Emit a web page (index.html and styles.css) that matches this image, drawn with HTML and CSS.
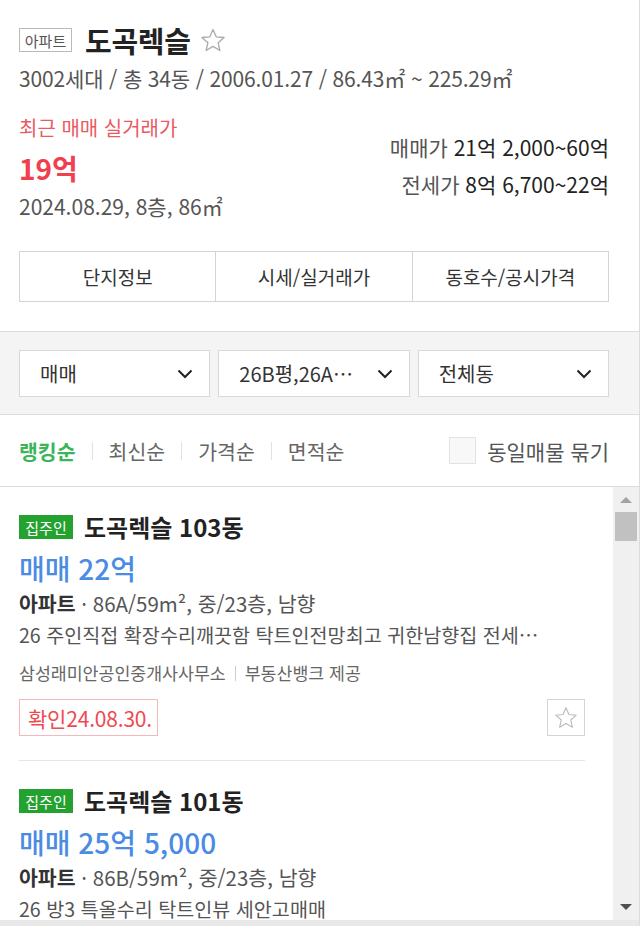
FILE: index.html
```html
<!DOCTYPE html>
<html lang="ko">
<head>
    <meta charset="UTF-8">
    <meta name="viewport" content="width=device-width, initial-scale=1.0">
    <title>도곡렉슬</title>
    <link rel="stylesheet" href="styles.css">
</head>
<body>
<div class="page">

    <!-- Complex summary -->
    <header class="complex">
        <div class="title-row">
            <span class="type-badge">아파트</span>
            <h1 class="complex-name">도곡렉슬</h1>
            <svg class="title-star" width="26" height="24" viewBox="0 0 26 24">
                <path d="M13 1.5l3.2 7.3 7.9.7-6 5.2 1.8 7.8L13 18.4l-6.9 4.1 1.8-7.8-6-5.2 7.9-.7z" fill="none" stroke="#aaa" stroke-width="1.3" stroke-linejoin="round"/>
            </svg>
        </div>
        <p class="summary">3002세대 / 총 34동 / 2006.01.27 / 86.43㎡ ~ 225.29㎡</p>

        <div class="price-row">
            <div class="recent">
                <p class="recent-label">최근 매매 실거래가</p>
                <p class="recent-price">19억</p>
                <p class="recent-meta">2024.08.29, 8층, 86㎡</p>
            </div>
            <div class="ranges">
                <p><span class="range-label">매매가</span> 21억 2,000~60억</p>
                <p><span class="range-label">전세가</span> 8억 6,700~22억</p>
            </div>
        </div>

        <nav class="tabs">
            <button class="tab">단지정보</button>
            <button class="tab">시세/실거래가</button>
            <button class="tab">동호수/공시가격</button>
        </nav>
    </header>

    <!-- Filters -->
    <div class="filters">
        <div class="select"><span>매매</span><svg class="chev" width="16" height="10" viewBox="0 0 16 10"><path d="M1.5 1.5L8 8l6.5-6.5" fill="none" stroke="#222" stroke-width="2"/></svg></div>
        <div class="select"><span>26B평,26A…</span><svg class="chev" width="16" height="10" viewBox="0 0 16 10"><path d="M1.5 1.5L8 8l6.5-6.5" fill="none" stroke="#222" stroke-width="2"/></svg></div>
        <div class="select"><span>전체동</span><svg class="chev" width="16" height="10" viewBox="0 0 16 10"><path d="M1.5 1.5L8 8l6.5-6.5" fill="none" stroke="#222" stroke-width="2"/></svg></div>
    </div>

    <!-- Sort options -->
    <div class="sortbar">
        <ul class="sorts">
            <li class="sort active">랭킹순</li>
            <li class="sort">최신순</li>
            <li class="sort">가격순</li>
            <li class="sort">면적순</li>
        </ul>
        <label class="group-check"><span class="box"></span>동일매물 묶기</label>
    </div>

    <!-- Listings -->
    <div class="listing-wrap">
        <div class="listing">
            <article class="item">
                <div class="item-head">
                    <span class="owner-badge">집주인</span>
                    <h2 class="item-name">도곡렉슬 103동</h2>
                </div>
                <p class="item-price">매매 22억</p>
                <p class="item-spec"><strong>아파트</strong> · 86A/59m², 중/23층, 남향</p>
                <p class="item-desc">26 주인직접 확장수리깨끗함 탁트인전망최고 귀한남향집 전세…</p>
                <p class="item-agent">삼성래미안공인중개사사무소<span class="bar"></span>부동산뱅크 제공</p>
                <div class="item-foot">
                    <span class="confirm">확인24.08.30.</span>
                    <button class="fav">
                        <svg width="24" height="23" viewBox="0 0 26 24"><path d="M13 1.5l3.2 7.3 7.9.7-6 5.2 1.8 7.8L13 18.4l-6.9 4.1 1.8-7.8-6-5.2 7.9-.7z" fill="none" stroke="#bbb" stroke-width="1.2" stroke-linejoin="round"/></svg>
                    </button>
                </div>
            </article>
            <article class="item">
                <div class="item-head">
                    <span class="owner-badge">집주인</span>
                    <h2 class="item-name">도곡렉슬 101동</h2>
                </div>
                <p class="item-price">매매 25억 5,000</p>
                <p class="item-spec"><strong>아파트</strong> · 86B/59m², 중/23층, 남향</p>
                <p class="item-desc">26 방3 특올수리 탁트인뷰 세안고매매</p>
            </article>
        </div>
        <div class="scrollbar">
            <span class="arrow up"></span>
            <div class="track"><span class="thumb"></span></div>
            <span class="arrow down"></span>
        </div>
    </div>
    <div class="bottom-strip"></div>
</div>
</body>
</html>
```

FILE: styles.css
```css
* {
    box-sizing: border-box;
}

body {
    margin: 0;
    font-family: "Noto Sans CJK KR", "Noto Sans", sans-serif;
    color: #222;
    background-color: #fff;
}

p, h1, h2, ul {
    margin: 0;
    padding: 0;
}

.page {
    width: 640px;
    height: 926px;
    border-right: 1px solid #dcdcdc;
    overflow: hidden;
}

/* Complex header */
.complex {
    padding: 24px 30px 29px 19px;
}

.title-row {
    display: flex;
    align-items: center;
    height: 32px;
}

.type-badge {
    display: inline-flex;
    align-items: center;
    justify-content: center;
    width: 53px;
    height: 24px;
    border: 1px solid #bbb;
    font-size: 15px;
    color: #555;
}

.complex-name {
    font-size: 29px;
    font-weight: 700;
    line-height: 32px;
    margin-left: 13px;
    letter-spacing: -0.3px;
}

.title-star {
    margin-left: 9px;
}

.summary {
    margin-top: 10px;
    font-size: 21px;
    line-height: 24px;
    color: #555;
    letter-spacing: -0.15px;
}

.price-row {
    display: flex;
    justify-content: space-between;
    margin-top: 26px;
}

.recent-label {
    font-size: 20px;
    line-height: 24px;
    color: #ea5a62;
}

.recent-price {
    margin-top: 10px;
    font-size: 28px;
    line-height: 36px;
    font-weight: 700;
    color: #f0404e;
}

.recent-meta {
    margin-top: 8px;
    font-size: 21px;
    line-height: 24px;
    color: #555;
}

.ranges {
    display: flex;
    flex-direction: column;
    align-items: flex-end;
    gap: 13px;
    padding-top: 19px;
    font-size: 21px;
    line-height: 24px;
    color: #222;
}

.range-label {
    color: #555;
}

.tabs {
    display: flex;
    margin-top: 33px;
    border: 1px solid #d4d4d4;
}

.tab {
    flex: 1;
    height: 49px;
    border: none;
    border-left: 1px solid #d4d4d4;
    background: #fff;
    font-family: inherit;
    font-size: 19px;
    color: #333;
}

.tab:first-child {
    border-left: none;
}

/* Filters */
.filters {
    display: flex;
    gap: 8px;
    padding: 18px 30px 17px 19px;
    background-color: #f4f4f4;
    border-top: 1px solid #dcdcdc;
    border-bottom: 1px solid #dcdcdc;
}

.select {
    flex: 1;
    display: flex;
    align-items: center;
    justify-content: space-between;
    height: 47px;
    padding: 0 16px 0 20px;
    background-color: #fff;
    border: 1px solid #d8d8d8;
    font-size: 20px;
    color: #333;
}

/* Sort bar */
.sortbar {
    display: flex;
    align-items: center;
    justify-content: space-between;
    height: 72px;
    padding: 0 30px 0 19px;
    border-bottom: 1px solid #dcdcdc;
}

.sorts {
    display: flex;
    list-style: none;
}

.sort {
    font-size: 20.5px;
    line-height: 18px;
    color: #666;
}

.sort + .sort {
    margin-left: 16px;
    padding-left: 16px;
    border-left: 1px solid #e2e2e2;
}

.sort.active {
    color: #3cb55a;
    font-weight: 700;
}

.group-check {
    display: flex;
    align-items: center;
    font-size: 21px;
    color: #555;
}

.group-check .box {
    width: 27px;
    height: 27px;
    margin-right: 11px;
    border: 1px solid #e2e2e2;
    background-color: #f8f8f8;
}

/* Listing (the page box clips what runs past the bottom) */
.listing-wrap {
    display: flex;
    height: 433px;
}

.listing {
    flex: 1;
}

.item {
    margin: 0 28px 0 19px;
    padding: 25px 0 24px;
    border-bottom: 1px solid #e6e6e6;
}

.item:last-child {
    border-bottom: none;
    padding-bottom: 0;
}

.item-head {
    display: flex;
    align-items: center;
    height: 30px;
}

.owner-badge {
    display: inline-flex;
    align-items: center;
    justify-content: center;
    width: 54px;
    height: 24px;
    background-color: #24a22f;
    color: #fff;
    font-size: 15px;
}

.item-name {
    margin-left: 11px;
    font-size: 24px;
    font-weight: 700;
    line-height: 30px;
}

.item-price {
    margin-top: 10px;
    font-size: 28px;
    line-height: 32px;
    font-weight: 500;
    color: #4a8ce3;
}

.item-spec {
    margin-top: 7px;
    font-size: 20.5px;
    line-height: 24px;
    color: #555;
}

.item-spec strong {
    font-weight: 700;
    color: #333;
}

.item-desc {
    margin-top: 9px;
    font-size: 19.6px;
    line-height: 22px;
    color: #555;
    white-space: nowrap;
}

.item-agent {
    display: flex;
    align-items: center;
    margin-top: 16px;
    font-size: 17.3px;
    line-height: 22px;
    color: #666;
}

.item-agent .bar {
    width: 1px;
    height: 15px;
    margin: 0 9px;
    background-color: #ccc;
}

.item-foot {
    display: flex;
    align-items: center;
    justify-content: space-between;
    margin-top: 15px;
}

.confirm {
    display: inline-flex;
    align-items: center;
    height: 37px;
    padding: 0 5px 0 8px;
    border: 1px solid #f5b7ba;
    font-size: 21px;
    color: #ef4a52;
    letter-spacing: -0.2px;
}

.fav {
    display: flex;
    align-items: center;
    justify-content: center;
    width: 38px;
    height: 37px;
    padding: 0;
    background: #fff;
    border: 1px solid #d4d4d4;
}

/* Fake scrollbar */
.scrollbar {
    display: flex;
    flex-direction: column;
    align-items: center;
    width: 26px;
    background-color: #f0f0f0;
}

.arrow {
    width: 0;
    height: 0;
    border-left: 6px solid transparent;
    border-right: 6px solid transparent;
}

.arrow.up {
    margin-top: 10px;
    border-bottom: 6px solid #a3a3a3;
}

.arrow.down {
    margin-bottom: 10px;
    border-top: 6px solid #505050;
}

.track {
    flex: 1;
    align-self: stretch;
    padding: 9px 2px 0;
}

.thumb {
    display: block;
    height: 29px;
    background-color: #c1c1c1;
}

.bottom-strip {
    height: 6px;
    background-color: #e8e8e8;
}
```
